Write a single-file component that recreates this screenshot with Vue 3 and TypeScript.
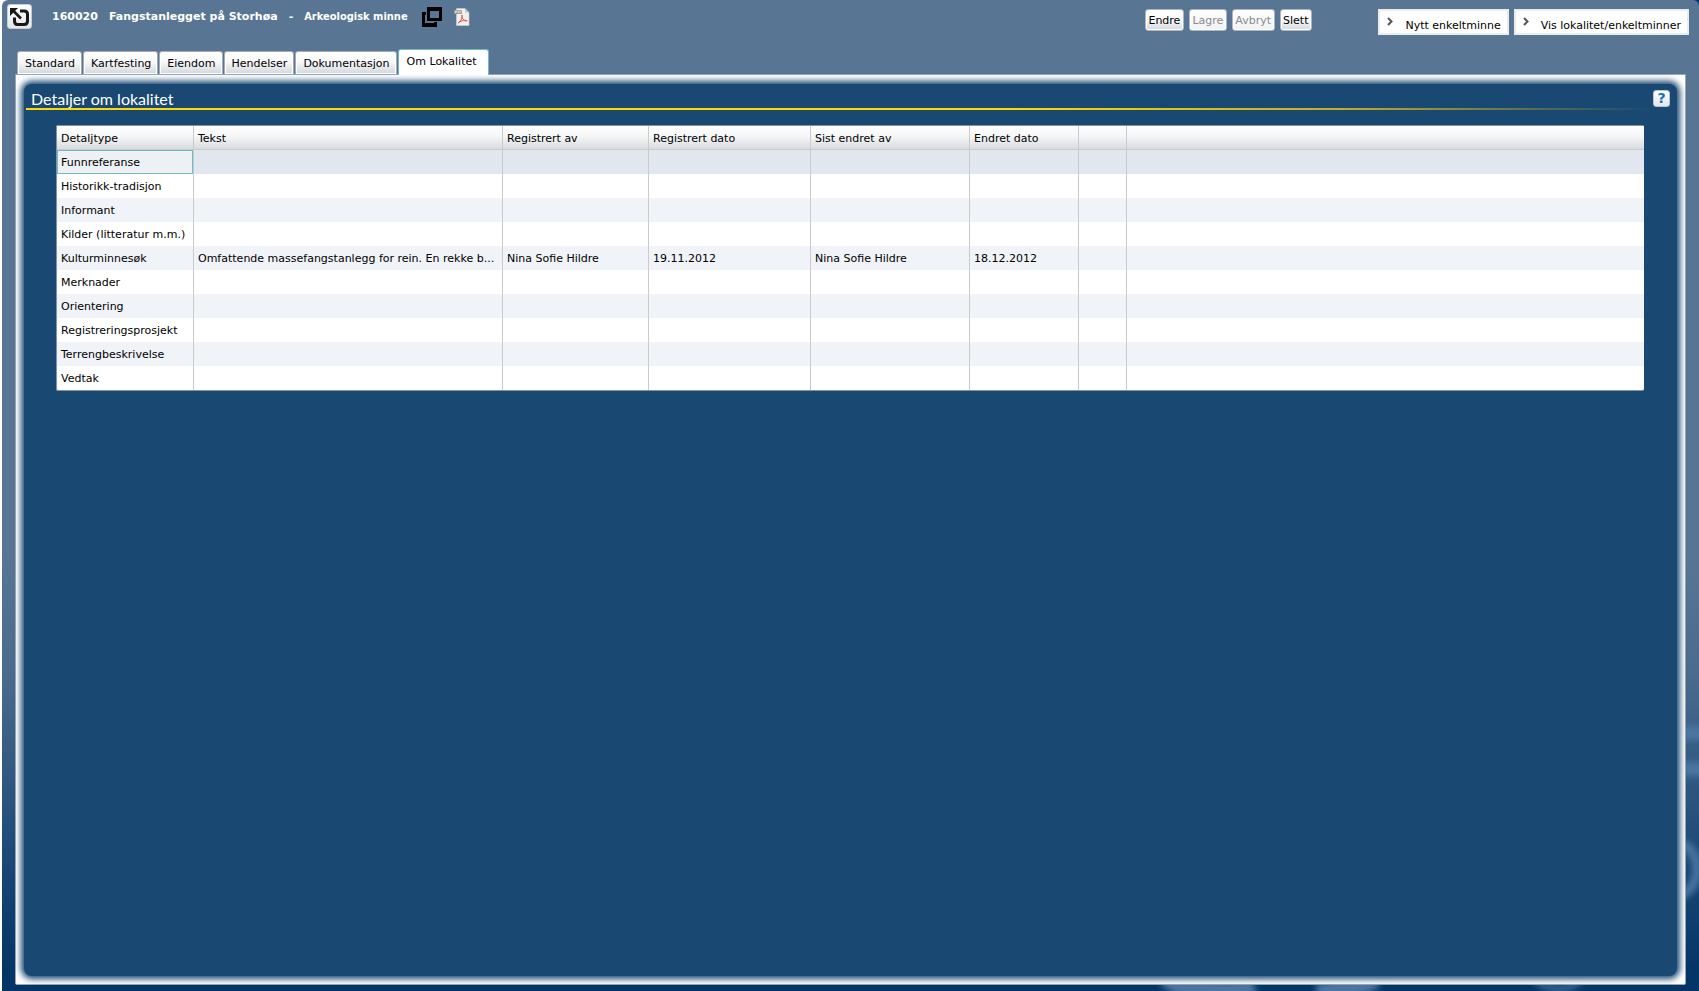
<script setup lang="ts">
import { ref } from 'vue'

interface Detail {
  type: string
  text?: string
  registeredBy?: string
  registeredDate?: string
  changedBy?: string
  changedDate?: string
}

const tabs: string[] = ['Standard', 'Kartfesting', 'Eiendom', 'Hendelser', 'Dokumentasjon', 'Om Lokalitet']
const activeTab = ref('Om Lokalitet')
const selected = ref('Funnreferanse')

const details: Detail[] = [
  { type: 'Funnreferanse' },
  { type: 'Historikk-tradisjon' },
  { type: 'Informant' },
  { type: 'Kilder (litteratur m.m.)' },
  {
    type: 'Kulturminnesøk',
    text: 'Omfattende massefangstanlegg for rein. En rekke b...',
    registeredBy: 'Nina Sofie Hildre',
    registeredDate: '19.11.2012',
    changedBy: 'Nina Sofie Hildre',
    changedDate: '18.12.2012',
  },
  { type: 'Merknader' },
  { type: 'Orientering' },
  { type: 'Registreringsprosjekt' },
  { type: 'Terrengbeskrivelse' },
  { type: 'Vedtak' },
]
</script>

<template>
  <div class="page">
    <div class="shell">
      <svg class="swirls" width="560" height="300" viewBox="0 0 560 300" aria-hidden="true">
        <g fill="none" stroke="#4c76a2" filter="url(#soft)">
          <path d="M530 42H570" stroke-width="14" />
          <path d="M530 78H570" stroke-width="14" />
          <path d="M530 150Q556 152 558 176Q558 202 534 206" stroke-width="9" />
          <path d="M28 284Q70 312 116 298" stroke-width="24" />
          <path d="M178 304Q210 300 236 286" stroke-width="22" />
          <path d="M396 288Q420 308 442 288" stroke-width="8" opacity=".7" />
        </g>
        <defs>
          <filter id="soft" x="-10%" y="-10%" width="120%" height="120%"><feGaussianBlur stdDeviation="3" /></filter>
        </defs>
      </svg>

      <header class="top">
        <button class="back" type="button" aria-label="Tilbake">
          <svg width="21" height="20" viewBox="0 0 21 20" fill="none" stroke="#181818" stroke-width="3">
            <path d="M11 4H15Q18.500 4 18.500 7V14Q18.500 17.500 15 17.500H8.500Q5.500 17.500 5.500 14V10.500" />
            <path d="M3.500 3L12 11.500" stroke-width="2.600" />
            <path d="M1 1H9L1 9Z" fill="#181818" stroke="none" />
          </svg>
        </button>
        <h1 class="title">
          <span>160020</span><span>Fangstanlegget på Storhøa</span><span>-</span><span class="kind">Arkeologisk minne</span>
        </h1>
        <button class="plain" type="button" aria-label="Nytt vindu">
          <svg width="20" height="20" viewBox="0 0 20 20">
            <path fill="#000" fill-rule="evenodd" d="M5 0H20V14H5ZM8 4V11H17V4Z" />
            <path fill="#000" d="M0 5H4V8H3V16H12V15H15V20H0Z" />
          </svg>
        </button>
        <button class="plain" type="button" aria-label="PDF">
          <svg width="16" height="18" viewBox="0 0 16 18">
            <path fill="#f2f0ee" stroke="#d0ccc8" stroke-width=".6" d="M2.500.5H11L15 4.500V17.500H2.500Z" />
            <path fill="#c9c5c1" d="M11 .5L15 4.500H11Z" />
            <rect x="0" y="2" width="8" height="4" rx="1" fill="#a19b98" />
            <path d="M1.500 5V3H3V4H1.500M4.300 5V3H5V5M6.200 5V3H7.500" stroke="#eee" stroke-width=".6" fill="none" />
            <path fill="none" stroke="#dc5a50" stroke-width="1" d="M4 15C6 14.500 8.500 10 8.300 7.500C8 6 7.200 7.500 8 9.500C9 12 11 13.500 13.200 13C12 11.500 8 12 4 15" />
          </svg>
        </button>

        <div class="actions">
          <button class="small" type="button">Endre</button>
          <button class="small" type="button" disabled>Lagre</button>
          <button class="small" type="button" disabled>Avbryt</button>
          <button class="small" type="button">Slett</button>
        </div>
        <div class="links">
          <button v-for="label in ['Nytt enkeltminne', 'Vis lokalitet/enkeltminner']" :key="label" class="big" type="button">
            <svg width="6" height="10" viewBox="0 0 6 10" fill="none" stroke="#555" stroke-width="2"><path d="M1 1L4.500 4.500L1 8" /></svg>
            <span>{{ label }}</span>
          </button>
        </div>
      </header>

      <nav class="tabs" role="tablist">
        <button
          v-for="tab in tabs"
          :key="tab"
          type="button"
          role="tab"
          class="tab"
          :class="{ active: tab === activeTab }"
          :aria-selected="tab === activeTab"
          @click="activeTab = tab"
        >{{ tab }}</button>
      </nav>

      <main class="frame">
        <section class="panel">
          <div class="heading">
            <h2>Detaljer om lokalitet</h2>
            <button class="help" type="button" aria-label="Hjelp">?</button>
          </div>
          <table class="grid">
            <colgroup>
              <col class="c-type" /><col class="c-text" /><col class="c-by" /><col class="c-date" />
              <col class="c-changed" /><col class="c-cdate" /><col class="c-blank" /><col />
            </colgroup>
            <thead>
              <tr>
                <th>Detaljtype</th><th>Tekst</th><th>Registrert av</th><th>Registrert dato</th>
                <th>Sist endret av</th><th>Endret dato</th><th></th><th></th>
              </tr>
            </thead>
            <tbody>
              <tr v-for="d in details" :key="d.type" :class="{ selected: d.type === selected }" @click="selected = d.type">
                <td>{{ d.type }}</td><td>{{ d.text }}</td><td>{{ d.registeredBy }}</td><td>{{ d.registeredDate }}</td>
                <td>{{ d.changedBy }}</td><td>{{ d.changedDate }}</td><td></td><td></td>
              </tr>
            </tbody>
          </table>
        </section>
      </main>
    </div>
  </div>
</template>

<style>
body {
  margin: 0;
  background: #fff;
}
</style>

<style scoped>
* {
  box-sizing: border-box;
}
.page {
  min-height: 100vh;
  padding-left: 2px;
  display: flex;
  background: linear-gradient(90deg, #fff 50%, #033566 50%);
  font: 11px/14px Verdana, "DejaVu Sans", sans-serif;
  color: #000;
}
button {
  font: inherit;
  color: inherit;
  margin: 0;
  padding: 0;
  border: 0;
  background: none;
}
.shell {
  position: relative;
  flex: 1;
  min-width: 0;
  display: flex;
  flex-direction: column;
  padding: 0 13px 6px 13px;
  border-radius: 6px 6px 0 0;
  background: linear-gradient(#587693 0, #587693 56%, #4b6b8d 68%, #1d4a77 86%, #033566 98%);
  overflow: hidden;
}
.swirls {
  position: absolute;
  right: 0;
  bottom: 0;
}
.top {
  position: relative;
  display: flex;
  align-items: flex-start;
  height: 49px;
  margin: 0 -3px 0 -8px;
  padding-top: 4px;
}
.back {
  display: grid;
  place-items: center;
  width: 25px;
  height: 25px;
  border: 1px solid #c4ccd4;
  border-radius: 3px;
  background: linear-gradient(#fff, #e4e6e9);
}
.title {
  display: flex;
  margin: 6px 14px 0 20px;
  gap: 11px;
  font-size: 11px;
  line-height: 14px;
  font-weight: bold;
  color: #fff;
  white-space: nowrap;
}
.kind {
  font-family: "DejaVu Sans Condensed", "DejaVu Sans", sans-serif;
}
.plain {
  height: 20px;
  margin: 3px 12px 0 0;
}
.plain svg,
.back svg {
  display: block;
}
.actions {
  display: flex;
  gap: 5px;
  margin: 5px 66px 0 auto;
}
.small {
  height: 22px;
  padding: 1px 3px 0 2px;
  border: 1px solid #a9b6c3;
  border-radius: 3px;
  background: linear-gradient(#fff, #fafafa 45%, #d5d8de);
  box-shadow: inset 0 0 0 1px #fff;
}
.small:disabled {
  color: #8b8b8b;
  background: linear-gradient(#fff, #f0f2f4);
}
.links {
  display: flex;
  gap: 5px;
  margin-top: 5px;
}
.big {
  display: flex;
  align-items: center;
  height: 26px;
  padding: 0 6px 0 7px;
  border: 2px solid #ececec;
  background: #fff;
  white-space: nowrap;
}
.big span {
  margin: 7px 0 0 12px;
}
.tabs {
  position: relative;
  display: flex;
  align-items: flex-end;
  gap: 1px;
  height: 25px;
  padding-left: 2px;
}
.tab {
  height: 23px;
  padding: 1px 6px 0 7px;
  border: 1px solid #a3adb9;
  border-bottom: 0;
  border-radius: 3px 3px 0 0;
  background: linear-gradient(#fff, #f7f8f9 45%, #d2d6dc);
  box-shadow: inset 0 0 0 1px #fff;
}
.tab.active {
  height: 26px;
  margin: 0 0 -1px 0;
  padding: 0 11px 2px 8px;
  border-color: #6fb9ca;
  background: #fff;
  z-index: 1;
}
.frame {
  position: relative;
  flex: 1;
  display: flex;
  padding: 9px 8px 8px;
  border: 1px solid #9aa7b6;
  border-radius: 0 0 2px 2px;
  background: #fff;
}
.panel {
  flex: 1;
  min-width: 0;
  padding: 5px 1px;
  border-radius: 8px;
  background: #194872;
  box-shadow: 0 0 6px 3px #194872;
}
.heading {
  display: flex;
  justify-content: space-between;
  align-items: flex-start;
  height: 21px;
  margin: 0 6px 15px 1px;
  border-bottom: 2px solid;
  border-image: linear-gradient(90deg, #ffd800 60%, #c4ac26 80%, #194872 99%) 1;
  padding: 0 0 0 5px;
}
h2 {
  margin: 0;
  font: 16px/19px "Century Gothic", Lato, sans-serif;
  color: #fff;
}
.help {
  width: 17px;
  height: 17px;
  margin-top: 1px;
  border: 1px solid #b8c4d0;
  border-radius: 3px;
  background: linear-gradient(#fff, #e3e6ea);
  color: #1173b5;
  font: bold 14px/15px "DejaVu Sans", sans-serif;
}
.grid {
  width: calc(100% - 63px);
  margin-left: 31px;
  table-layout: fixed;
  border-collapse: separate;
  border-spacing: 0;
  border: 1px solid #8293a3;
  border-right: 0;
  border-radius: 2px;
  background: #fff;
}
.c-type { width: 137px; }
.c-text { width: 309px; }
.c-by { width: 146px; }
.c-date { width: 162px; }
.c-changed { width: 159px; }
.c-cdate { width: 109px; }
.c-blank { width: 48px; }
th,
td {
  height: 24px;
  padding: 2px 0 0 4px;
  border-right: 1px solid #c9caca;
  text-align: left;
  font-weight: normal;
  white-space: nowrap;
  overflow: hidden;
}
th {
  border-bottom: 1px solid #c9caca;
  background: linear-gradient(#fff, #f5f6f7 45%, #d8dbdf);
}
th:last-child,
td:last-child {
  border-right: 0;
}
tbody tr:nth-child(odd) {
  background: #f0f3f8;
}
tbody tr.selected {
  background: #e2e6ee;
}
.selected td:first-child {
  background: #edf1f4;
  box-shadow: inset 0 0 0 1px #6fbacb;
}
</style>
